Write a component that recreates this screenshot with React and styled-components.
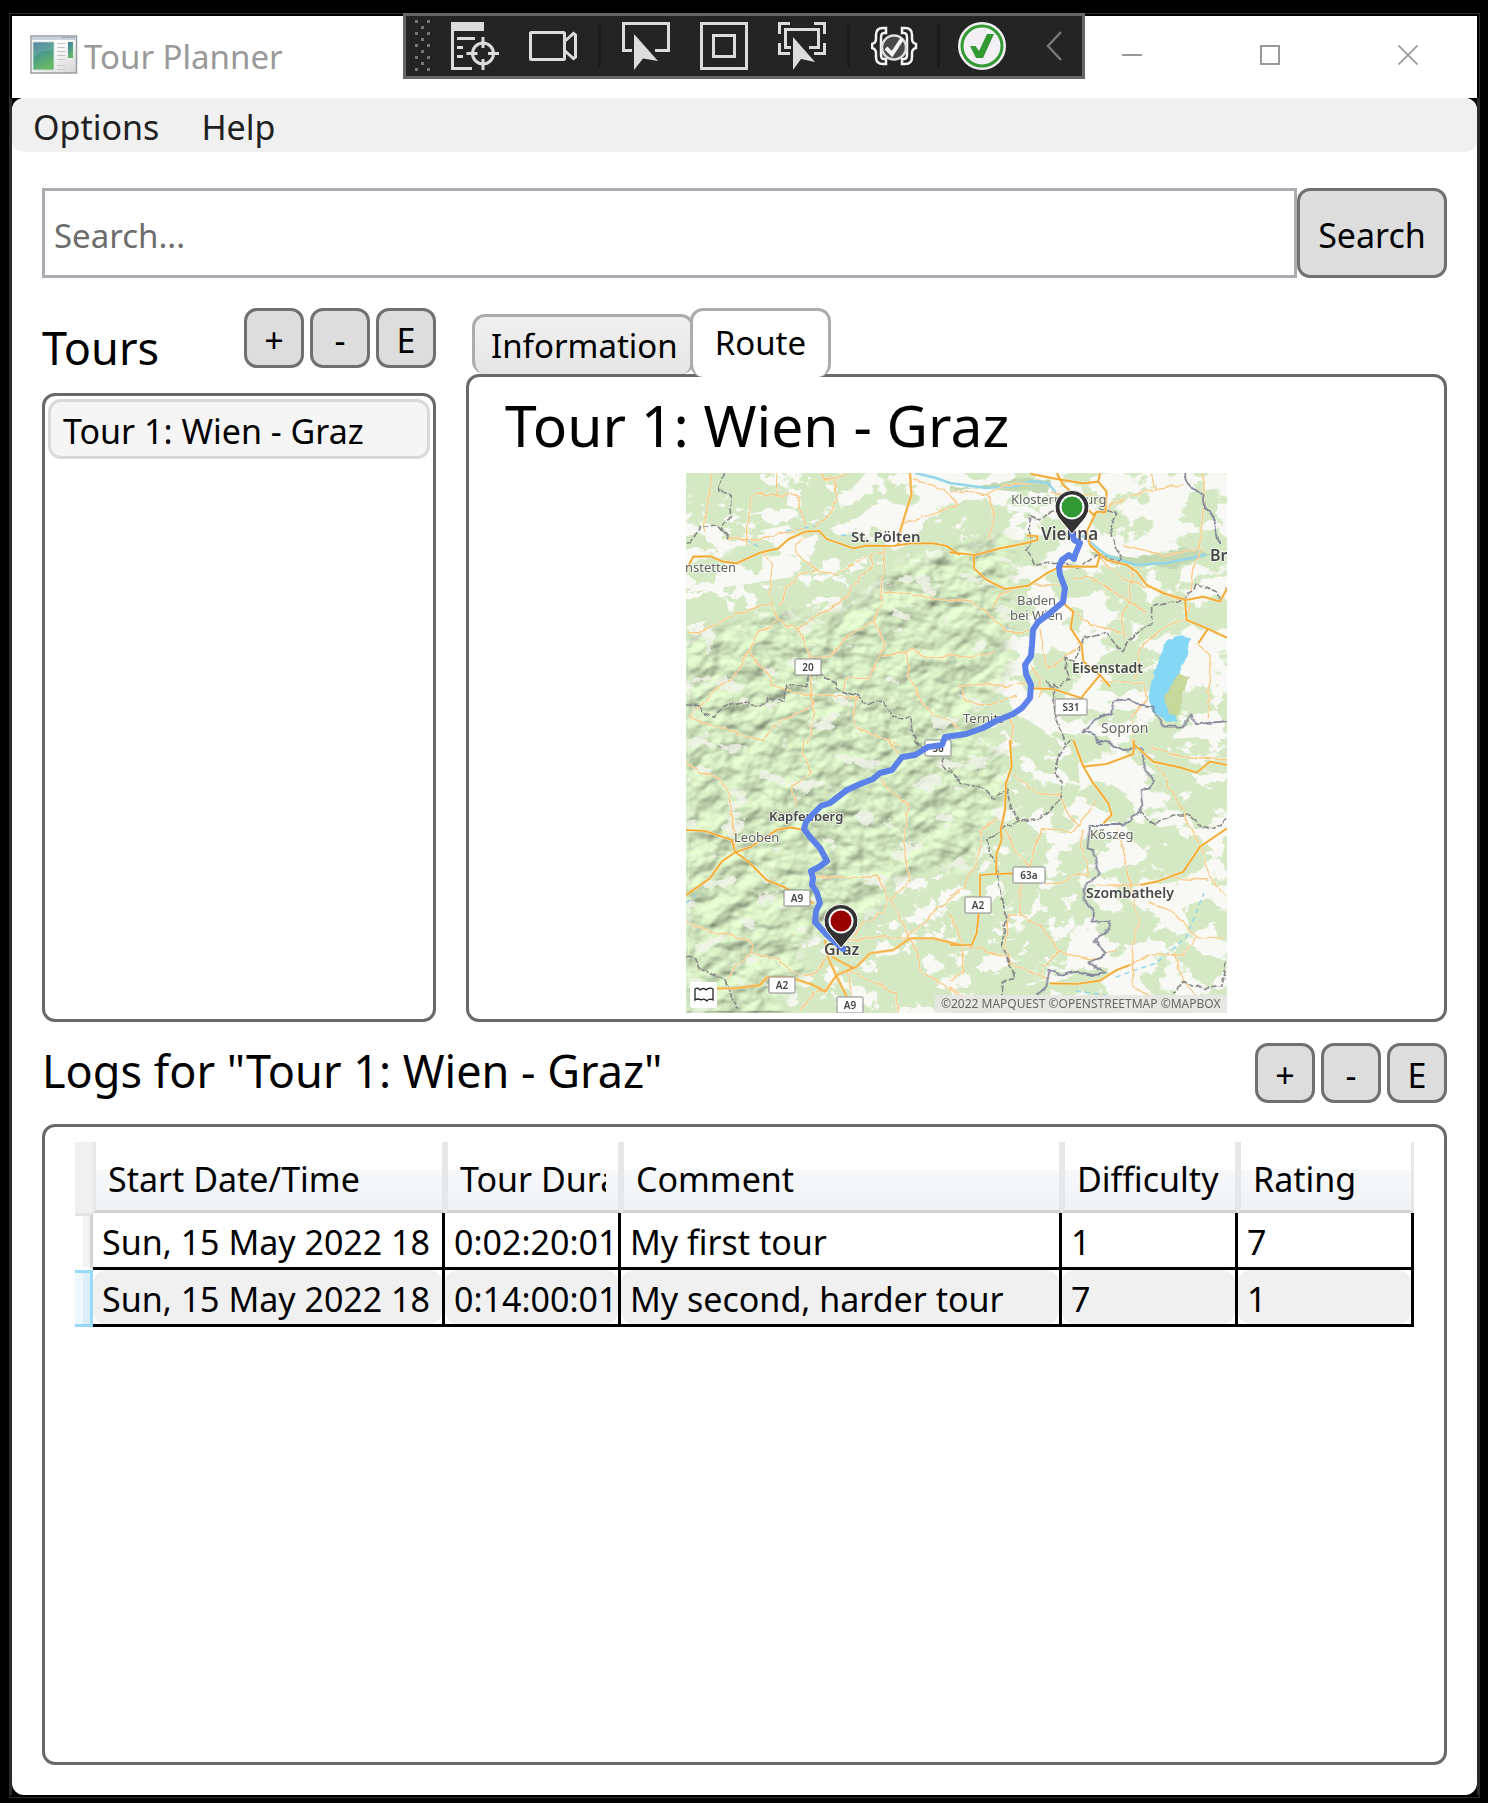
import React, { useState } from "react";
import styled, { createGlobalStyle, css } from "styled-components";

const GlobalStyle = createGlobalStyle`
  *, *::before, *::after { box-sizing: border-box; }
  body {
    margin: 0;
    background: #000;
    color: #000;
    font-family: "Noto Sans", "Open Sans", sans-serif;
    font-size: 34px;
  }
  button, input, table { font: inherit; color: inherit; }
  h1, h2, p, ul { margin: 0; padding: 0; font-weight: 400; }
`;

const Screen = styled.div`
  position: relative;
  display: flex;
  flex-direction: column;
  min-height: 100vh;
  padding: 13px 8px 5px 9px;
`;

const Frame = styled.div`
  flex: 1;
  display: flex;
  flex-direction: column;
  border: 1px solid #2b2b2b;
  padding: 2px 0;
  background: #000;
`;

const TitleBar = styled.header`
  display: flex;
  align-items: center;
  height: 82px;
  margin: 0 2px;
  padding-left: 18px;
  padding-bottom: 4px;
  background: #fff;
`;

const AppTitle = styled.h1`
  flex: 1;
  padding: 4px 0 0 6px;
  font-size: 33px;
  line-height: 46px;
  color: #999;
`;

const WindowControl = styled.button`
  display: flex;
  align-items: center;
  justify-content: center;
  width: 138px;
  height: 78px;
  padding: 0;
  border: 0;
  background: transparent;
`;

const Body = styled.div`
  flex: 1;
  display: flex;
  flex-direction: column;
  border: solid #2b2b2b;
  border-width: 0 2px;
`;

const Content = styled.div`
  flex: 1;
  display: flex;
  flex-direction: column;
  border-radius: 12px;
  background: #fff;
`;

const MenuBar = styled.nav`
  display: flex;
  height: 54px;
  padding-left: 21px;
  gap: 42px;
  border-radius: 12px;
  background: #f0f0f0;
`;

const MenuItem = styled.button`
  padding: 4px 0 0;
  border: 0;
  background: transparent;
  color: #212121;
`;

const Main = styled.main`
  flex: 1;
  display: flex;
  flex-direction: column;
  padding: 36px 30px 30px;
`;

const SearchForm = styled.form`
  display: flex;
  height: 90px;
  margin-bottom: 30px;
`;

const SearchInput = styled.input`
  flex: 1;
  min-width: 0;
  padding: 4px 9px 0;
  border: 3px solid #abadb3;
  background: #fff;
  font-size: 33px;
  outline: none;
  &::placeholder { color: #6d6d6d; opacity: 1; }
`;

const Button = styled.button`
  width: ${(p) => (p.$wide ? "150px" : "60px")};
  padding: 3px 0 0;
  border: 3px solid #707070;
  border-radius: 13px;
  background: #ddd;
`;

const ButtonGroup = styled.div`
  display: flex;
  gap: 6px;
  height: 60px;
`;

const Columns = styled.div`
  display: grid;
  grid-template-columns: 394px minmax(0, 1fr);
  column-gap: 30px;
`;

const Column = styled.section`
  display: flex;
  flex-direction: column;
  min-width: 0;
`;

const HeadingRow = styled.div`
  display: flex;
  justify-content: space-between;
  align-items: ${(p) => (p.$low ? "flex-end" : "flex-start")};
`;

const Heading = styled.h2`
  font-size: 45px;
  line-height: ${(p) => (p.$tall ? "56px" : "40px")};
  white-space: nowrap;
`;

const panel = css`
  border: 3px solid #696969;
  border-radius: 13px;
  background: #fff;
`;

const TourList = styled.ul`
  ${panel}
  flex: 1;
  margin-top: 25px;
  padding: 3px;
  list-style: none;
`;

const TourItem = styled.button`
  width: 100%;
  height: 60px;
  padding: 3px 12px 0;
  border: 3px solid #d9d9d9;
  border-radius: 13px;
  background: #f5f5f5;
  text-align: left;
`;

const Tabs = styled.div`
  display: flex;
  align-items: flex-end;
  height: 66px;
  padding-left: 6px;
`;

const Tab = styled.button`
  height: 60px;
  padding: 0 13px 0 16px;
  border: 3px solid #acacac;
  border-bottom: 0;
  border-radius: 13px;
  background: linear-gradient(#f0f0f0, #e5e5e5);
  font-size: 33px;
  ${(p) =>
    p.$active &&
    css`
      z-index: 1;
      height: 69px;
      margin: 0 0 -3px -4px;
      padding: 0 22px 3px;
      background: #fff;
    `}
`;

const RoutePanel = styled.div`
  ${panel}
  display: flex;
  flex-direction: column;
  align-items: center;
  padding-bottom: 6px;
`;

const RouteTitle = styled.h2`
  align-self: stretch;
  padding-left: 36px;
  font-size: 57px;
  line-height: 96px;
`;

const MapPicture = styled.svg`
  display: block;
  width: 541px;
  max-width: 100%;
`;

const Logs = styled.section`
  flex: 1;
  display: flex;
  flex-direction: column;
  margin-top: 21px;
`;

const LogPanel = styled.div`
  ${panel}
  flex: 1;
  margin-top: 21px;
  padding: 15px 30px;
`;

const LogTable = styled.table`
  width: 100%;
  table-layout: fixed;
  border-collapse: separate;
  border-spacing: 0;
  text-align: left;
`;

const Col = styled.col`
  width: ${(p) => p.$w};
`;

const HeadCell = styled.th`
  height: 71px;
  padding: 5px 12px 0;
  border: solid #e6e7e9;
  border-width: 0 3px 0 3px;
  border-bottom: 3px solid #d1d2d4;
  background: linear-gradient(#fff 40%, #f7f8fa 41%, #f0f2f4);
  font-weight: 400;
`;

const Corner = styled.td`
  padding: 0;
  background: #f0f0f0;
`;

const RowHead = styled.td`
  padding: 0;
  border-right: 3px solid ${(p) => (p.$selected ? "#98d8f8" : "#d3d3d3")};
  border-top: 3px solid ${(p) => (p.$selected ? "#98d8f8" : "#e4e4e6")};
  border-bottom: 3px solid ${(p) => (p.$selected ? "#98d8f8" : "#fff")};
  background: ${(p) =>
    p.$selected
      ? "linear-gradient(90deg, #eef7fc 50%, #dceefa 51%)"
      : "linear-gradient(90deg, #fff 50%, #f1f3f5 51%)"};
`;

const Cell = styled.td`
  height: 57px;
  padding: 0;
  border: solid #000;
  border-width: 0 3px 3px 0;
`;

const CellText = styled.div`
  height: 54px;
  padding: 4px 0 0 9px;
  border-radius: 13px;
  background: ${(p) => (p.$selected ? "#f0f0f0" : "#fff")};
  line-height: 50px;
`;

const Clip = styled.div`
  overflow: hidden;
  white-space: nowrap;
`;

const DebugBar = styled.div`
  position: absolute;
  top: 13px;
  left: 50%;
  transform: translateX(-50%);
  display: flex;
  align-items: center;
  height: 66px;
  padding: 0 20px 0 9px;
  border: 3px solid #666;
  background: #242424;
`;

const ToolButton = styled.button`
  display: flex;
  width: ${(p) => (p.$narrow ? "16px" : "48px")};
  height: 48px;
  margin-left: ${(p) => p.$gap || 0}px;
  padding: 0;
  border: 0;
  align-items: center;
  background: transparent;
`;

const ToolSeparator = styled.span`
  width: 3px;
  height: 42px;
  margin: 0 ${(p) => (p.$tight ? "18px" : "21px")};
  background: #1b1b1b;
`;

const Grip = () => (
  <svg width="15" height="54" viewBox="0 0 15 54" fill="#777">
    {Array.from({ length: 9 }, (_, i) =>
      i % 2 ? (
        <rect key={i} x="6" y={1 + i * 6} width="3" height="3" />
      ) : (
        <g key={i}>
          <rect x="0" y={1 + i * 6} width="3" height="3" />
          <rect x="12" y={1 + i * 6} width="3" height="3" />
        </g>
      )
    )}
  </svg>
);

const Glyph = ({ children }) => (
  <svg width="48" height="48" viewBox="0 0 48 48" fill="none" stroke="#dcdcdc" strokeWidth="3">
    {children}
  </svg>
);

const TreeIcon = () => (
  <Glyph>
    <path d="M0 0H33V9H0Z" fill="#dcdcdc" stroke="none" />
    <path d="M1.5 8V46.500H21M6 16.500H24M6 25.500H12M6 34.500H12" />
    <circle cx="32" cy="31.500" r="10.500" />
    <path d="M32 15V26M32 37V48M15.500 31.500H26.500M37 31.500H48" />
  </Glyph>
);

const CameraIcon = () => (
  <Glyph>
    <rect x="1.500" y="10.500" width="34" height="27" rx="1" />
    <path d="M36 19L44.500 11.500L46.500 13V35L44.500 36.500L36 29" />
  </Glyph>
);

const SelectIcon = () => (
  <Glyph>
    <path d="M10 28.500H1.500V1.500H46.500V28.500H33" />
    <path d="M12 12L36 39L21 36.500L12 48Z" fill="#dcdcdc" stroke="none" />
  </Glyph>
);

const AdornerIcon = () => (
  <Glyph>
    <rect x="1.500" y="1.500" width="45" height="45" />
    <rect x="13.500" y="13.500" width="21" height="21" />
  </Glyph>
);

const FocusIcon = () => (
  <Glyph>
    <path d="M1.500 12V1.500H12M36 1.500H46.500V12M1.500 21V31.500H12M36 31.500H46.500V21" />
    <path d="M13 25.500H7.500V7.500H40.500V25.500H31" />
    <path d="M15 15L37 40L23 37L15 48Z" fill="#dcdcdc" stroke="none" />
  </Glyph>
);

const ReloadIcon = () => (
  <Glyph>
    <g stroke="#f4f4f4" strokeWidth="2.500">
      <path d="M15 6H12Q5 6 5 13V17Q5 21 1 22V26Q5 27 5 31V35Q5 42 12 42H15V37H13Q10 37 10 33V16Q10 11 13 11H15Z" />
      <path d="M31 6H34Q41 6 41 13V17Q41 21 45 22V26Q41 27 41 31V35Q41 42 34 42H31V37H33Q36 37 36 33V16Q36 11 33 11H31Z" />
      <circle cx="23" cy="25.500" r="12" fill="#484848" stroke="#ddd" />
      <path d="M15 26L21 32L31 17" strokeWidth="4" />
    </g>
  </Glyph>
);

const StatusIcon = () => (
  <Glyph>
    <circle cx="24" cy="24" r="24" fill="#f2f0f4" stroke="none" />
    <circle cx="24" cy="24" r="20" stroke="#339933" />
    <path d="M12 24H17.500L21 29L29 12H36L25 36H18Z" fill="#339933" stroke="none" />
  </Glyph>
);

const ChevronIcon = () => (
  <svg width="16" height="30" viewBox="0 0 16 30" fill="none" stroke="#777" strokeWidth="2.500">
    <path d="M15 1L2 15L15 29" />
  </svg>
);

const AppIcon = () => (
  <svg width="48" height="40" viewBox="0 0 48 40">
    <defs>
      <linearGradient id="pane" x1="0" y1="0" x2="0.400" y2="1">
        <stop offset="0" stopColor="#42759e" />
        <stop offset="0.500" stopColor="#4a9a8b" />
        <stop offset="1" stopColor="#67b766" />
      </linearGradient>
      <linearGradient id="sheet" x1="0" y1="0" x2="1" y2="1">
        <stop offset="0.400" stopColor="#fff" />
        <stop offset="1" stopColor="#d4d4d4" />
      </linearGradient>
    </defs>
    <rect x="1" y="1" width="45.500" height="37" fill="url(#sheet)" stroke="#979da3" strokeWidth="1.500" />
    <rect x="2" y="2" width="43.500" height="3" fill="#c9d2dc" />
    <path d="M32 2.500H45" stroke="#98a0a8" strokeDasharray="3 1" />
    <rect x="3" y="7" width="21" height="28" fill="url(#pane)" stroke="#c6ddd5" />
    <path d="M4 22Q12 14 23 16V8H4Z" fill="#fff" opacity=".12" />
    <path d="M27 8.500H35M27 12.500H35M27 16.500H35M27 20.500H35M27 24.500H35M27 30.500H35M27 34.500H35" stroke="#c6c6c6" />
    <rect x="38" y="7" width="5" height="16" fill="url(#pane)" />
  </svg>
);

const majorRoads = [
  ["nw", "M18 315L40 275L90 274L130 290L170 295L240 263L295 250L325 223L375 200L418 198L440 222L520 250L560 242L640 243L690 235L760 235L800 243L840 270"],
  ["nw", "M690 24L694 90L675 150L660 200L655 240"],
  ["ne", "M0 262L75 270L150 250L225 235L262 225L262 213L230 212M72 270L72 310L110 345L165 372L235 362L290 325L330 305"],
  ["ne", "M320 24L340 60L380 95L430 150L440 140L466 142M440 140L410 200L420 240L470 285L530 300L560 320L590 360L640 385L710 405L760 395L810 410L831 370M705 405L710 465L770 490L831 518"],
  ["ne", "M240 26L310 40L400 55L445 50L450 24M445 50L470 80L466 142M340 415L370 440L362 490L395 540L400 590L450 630L480 665M450 630L400 690L395 700L310 672L250 670"],
  ["ne", "M330 305L440 305L450 270L420 240M775 490L745 535"],
  ["sw", "M18 270L75 273L155 300L165 335L205 365L260 420L310 440L400 490M18 465L90 415L125 365L165 337L210 322L290 270L330 262L372 270"],
  ["sw", "M100 745L165 745L240 735L260 712L330 712L360 722L400 735L435 755L470 705L530 680L570 640L640 630L690 595L760 595L840 615M435 600L445 655L468 705L500 770M455 650L520 685"],
  ["se", "M0 615L65 615L80 580L90 480L90 405L140 402L190 400M180 0L185 80L168 130L165 210L152 270L155 300L140 340L138 402M370 0L400 80L430 130L475 190L485 225L460 250"],
  ["se", "M400 80L470 72L550 42L552 0M550 12L610 65L690 82L740 98L780 65L831 75M570 435L620 425L700 395L750 320L831 265M300 730L380 732L450 722L500 690L540 675"],
];

const minorRoads = [
  ["nw", "M70 200L85 110L95 24M200 240L200 180L215 100L230 88L350 90L375 180M290 24L290 88M465 40L468 110L440 160L400 185M420 24L430 45L495 30"],
  ["nw", "M250 265L278 295L265 390L285 450L315 485L355 490L430 440L495 400L530 350L575 300L575 270L615 260M18 500L60 500L160 450L265 415M345 265L350 240L380 205M345 265L415 320L470 325L560 270"],
  ["nw", "M300 425L320 370L360 325L415 318M615 245L610 300L605 420L580 465L615 540L600 575L565 640L500 640L490 670M355 490L385 560L395 600L390 690L405 740L385 840"],
  ["nw", "M290 465L230 510L205 560L255 610L275 660L340 680L390 690L490 692L540 700M205 560L165 630L100 680L30 755L130 790L250 828L285 780L390 725M390 580L450 575L490 525L580 470"],
  ["nw", "M610 382L690 385L750 400L840 410M610 570L680 560L700 552L740 578L840 570M680 560L685 630L720 700L760 745L840 790M525 700L520 780L560 800L660 840M140 220L220 225L370 190M700 45L790 70L835 120L720 160L665 175"],
  ["ne", "M0 80L60 78L110 90L130 150L120 220M110 90L160 60L240 55M470 130L540 95L620 70L700 60M755 24L765 120L750 250L640 270L520 240M600 24L615 70M720 380L730 300L760 250"],
  ["ne", "M450 280L530 350L620 370L700 410M545 310L540 400L515 450L530 520M0 405L60 410L110 440L130 460L170 500L240 500M270 490L290 610L340 580L395 540M370 340L430 340L520 400L590 440"],
  ["ne", "M20 665L120 655L165 665L240 650M30 665L50 710L120 720L200 690M180 750L190 840M450 645L580 655L590 700L545 760L550 840M370 440L420 480L520 500M560 640L570 550L640 490L710 460L720 420"],
  ["ne", "M740 535L780 570L775 760M240 600L270 640L270 700M0 570L80 575L130 560M300 80L330 90L430 90M120 430L150 390L230 360L330 360"],
  ["sw", "M18 65L60 95L110 110L150 160L155 240L165 335M375 0L370 40L395 100L335 140L350 200M620 0L655 40M600 120L640 160L685 190L670 300L690 420L630 480L660 530L690 595"],
  ["sw", "M410 405L530 415L590 405L625 475L610 520L550 550L520 590M18 545L100 580L160 585L215 610L215 640L160 690L140 720M215 640L290 655L340 700L400 705L435 655M500 600L620 590L680 595L770 510L840 455"],
  ["sw", "M690 600L715 640L720 690L800 740L840 770M500 690L590 730L650 760L655 818M360 815L400 760L440 745M505 690L520 818"],
  ["se", "M190 105L260 160L325 165L360 230L380 255M60 400L80 370L95 270L145 235M0 470L40 440L60 405M165 270L200 340L240 380L275 265L370 275L440 180M235 380L290 430L330 430L370 405L415 405L410 360L390 320L400 265"],
  ["se", "M210 400L210 525L270 555L330 635L420 660L500 630M205 525L175 530L165 620L180 670L270 710L300 720M330 635L280 680L280 720M500 265L520 340L540 420L565 550L545 640L550 740L600 770M440 435L570 435"],
  ["se", "M560 20L640 100L700 220L750 315L780 410L831 470M590 485L660 510L740 590L831 595M740 590L700 640L590 650L540 675M670 640L700 720L740 770M600 20L700 50L831 60M670 415L775 420M0 520L35 610L40 700L0 720M35 610L100 630L165 650M0 740L40 770"],
];

const borders = [
  ["nw", "M130 24L115 80L150 85L155 155L130 170L125 190L140 220M140 215L110 180L60 185L35 230L18 232"],
  ["nw", "M18 720L60 722L70 745L100 757L140 720L180 710L225 722L260 715L265 700L310 705L320 660L380 665L385 635L430 628L465 655L470 670L490 680L540 695L545 712L610 712L635 750L665 765L690 755L700 800L715 840"],
  ["ne", "M330 120L270 165L240 150L235 190L245 230L228 255L260 300L330 290L390 305L440 270L500 290L515 285L500 250L480 205L500 145L440 130"],
  ["ne", "M375 590L345 580L360 640L320 665L290 650L310 670L315 760L350 840M375 580L400 520L465 500L515 560L550 510L605 475L605 425L700 405L740 355L800 380L810 410L831 365"],
  ["sw", "M18 650L45 655L70 690L130 715L150 760L180 810M700 0L735 25L780 20M785 50L790 80L840 120"],
  ["se", "M0 80L30 130L100 145L135 175L170 140L180 200L210 243L270 235L330 180L335 130L315 100L330 40L365 0M210 243L160 260L155 275L110 300L145 400L150 460L170 530L155 620L195 710L160 730L155 770"],
  ["se", "M565 215L615 255L670 225L720 225L750 255L790 270L831 235M831 665L815 740L760 745L700 725L670 760"],
];

const frontiers = [
  ["ne", "M705 24L715 55L760 90L765 130L785 150L795 175L808 240"],
  ["ne", "M455 840L420 800L400 805L430 765L485 745L495 710L540 705L560 718L610 725L640 785L700 785L725 745L735 778L831 768"],
  ["se", "M440 0L480 10L520 30L575 25L585 90L612 120L602 148L575 155L580 190L565 215L520 255L420 255L412 325L430 330L448 400L410 430L400 480L430 510L425 545L475 542L478 565L435 600L470 640L415 668L465 700L430 705L380 695L340 705L302 690L292 740L260 768"],
];

const tileTransform = {
  nw: "translate(-6 -8) scale(.33333)",
  ne: "translate(264 -8) scale(.33333)",
  sw: "translate(-6 267) scale(.33333)",
  se: "translate(264 267) scale(.33333)",
};

const Lines = ({ data, ...rest }) => (
  <g fill="none" strokeLinejoin="round" {...rest}>
    {data.map(([tile, d], i) => (
      <path key={i} d={d} transform={tileTransform[tile]} />
    ))}
  </g>
);

const shields = [
  [109, 186, 26, "20"],
  [369, 226, 32, "S31"],
  [239, 267, 26, "S6"],
  [98, 417, 26, "A9"],
  [279, 424, 26, "A2"],
  [327, 394, 32, "63a"],
  [83, 504, 26, "A2"],
  [151, 524, 26, "A9"],
];

const towns = [
  [165, 69, "St. Pölten", 15, 600],
  [-1, 99, "nstetten", 13, 400],
  [325, 31, "Klosterneuburg", 13, 400],
  [355, 67, "Vienna", 17, 600],
  [524, 88, "Br", 16, 600],
  [331, 132, "Baden", 13, 400],
  [324, 147, "bei Wien", 13, 400],
  [386, 200, "Eisenstadt", 14, 600],
  [277, 250, "Ternitz", 13, 400],
  [415, 260, "Sopron", 14, 400],
  [83, 348, "Kapfenberg", 13, 600],
  [48, 369, "Leoben", 13, 400],
  [404, 366, "Kőszeg", 13, 400],
  [400, 425, "Szombathely", 14, 600],
  [138, 482, "Graz", 16, 600],
];

const Pin = ({ x, y, color }) => (
  <g transform={`translate(${x} ${y})`}>
    <path d="M0 27L-14 10A17 17 0 1 1 14 10Z" fill="#333" stroke="#fff" strokeWidth="1" />
    <circle r="12.500" fill="#fff" />
    <circle r="10.500" fill={color} />
  </g>
);

const mountains =
  "M0 165L60 150L90 135L130 150L180 120L215 90L270 75L320 62L330 90L320 120L330 140L318 170L325 195L300 230L285 262L310 275L318 320L300 350L285 400L240 395L200 410L190 440L140 455L110 470L120 500L90 541L0 541Z";

const RouteMap = () => (
  <MapPicture viewBox="0 0 541 540" role="img" aria-label="Route from Vienna to Graz">
    <defs>
      <filter id="woods" x="0" y="0" width="100%" height="100%" colorInterpolationFilters="sRGB">
        <feTurbulence type="fractalNoise" baseFrequency=".026 .032" numOctaves="6" seed="8" />
        <feColorMatrix values="0 0 0 0 .83  0 0 0 0 .915  0 0 0 0 .765  26 0 0 0 -12.700" />
      </filter>
      <filter id="foothills" x="0" y="0" width="100%" height="100%" colorInterpolationFilters="sRGB">
        <feTurbulence type="fractalNoise" baseFrequency=".05 .06" numOctaves="5" seed="14" />
        <feColorMatrix values="0 0 0 0 .83  0 0 0 0 .915  0 0 0 0 .765  0 24 0 0 -10.600" />
        <feComposite in2="SourceAlpha" operator="in" />
      </filter>
      <filter id="clearings" x="0" y="0" width="100%" height="100%" colorInterpolationFilters="sRGB">
        <feTurbulence type="fractalNoise" baseFrequency=".03 .05" numOctaves="6" seed="21" />
        <feColorMatrix values="0 0 0 0 .95  0 0 0 0 .955  0 0 0 0 .92  0 22 0 0 -14.600" />
      </filter>
      <filter id="relief" x="0" y="0" width="100%" height="100%" colorInterpolationFilters="sRGB">
        <feTurbulence type="fractalNoise" baseFrequency=".04 .055" numOctaves="3" seed="5" />
        <feGaussianBlur stdDeviation="1" result="noise" />
        <feDiffuseLighting in="noise" surfaceScale="4" lightingColor="#cfe4bc" diffuseConstant="1.130">
          <feDistantLight azimuth="235" elevation="64" />
        </feDiffuseLighting>
      </filter>
      <filter id="wobble" x="-5%" y="-5%" width="110%" height="110%">
        <feTurbulence type="fractalNoise" baseFrequency=".09" numOctaves="2" seed="3" />
        <feDisplacementMap in="SourceGraphic" scale="6" xChannelSelector="R" yChannelSelector="G" />
      </filter>
      <filter id="soften"><feGaussianBlur stdDeviation="6" /></filter>
      <mask id="range"><path d={mountains} fill="#fff" filter="url(#soften)" /></mask>
    </defs>
    <rect width="541" height="540" fill="#f8f8f4" />
    <rect width="541" height="540" filter="url(#woods)" />
    <path
      d="M0 0H180L140 45L60 60L0 45ZM0 120L200 90L264 30L345 40L318 110L350 135L320 190L264 240L390 262L395 330L350 345L390 400L380 500L240 540H0ZM400 190L445 170L470 190L440 205ZM430 165L475 125L500 135L480 160L445 185ZM430 270L541 262V330L480 320ZM440 360L500 350L530 380L480 400Z"
      filter="url(#foothills)"
    />
    <path d="M264 12L360 20L365 8L345 4L264 18ZM400 78L430 92L490 95L525 80L500 75L450 85Z" fill="#c2d8b0" filter="url(#wobble)" />
    <g mask="url(#range)">
      <rect width="541" height="540" filter="url(#relief)" />
      <rect width="541" height="540" filter="url(#clearings)" opacity=".8" />
    </g>
    <g fill="none" stroke="#92d6e8" strokeWidth="2.500">
      <path d="M229 0L250 5L264 10L300 15L330 13L345 8L362 10L370 20M395 62L420 82L450 92L480 90L520 82" />
      <path d="M60 67L75 75M100 58L130 53M155 62L175 63M0 430L10 422M390 518L420 522M430 504L470 490L500 465L518 420" strokeDasharray="5 4" strokeWidth="1.500" />
    </g>
    <path d="M481 167L497 162L505 165L500 185L490 210L488 240L493 250L480 248L467 237L462 227L467 200Z" fill="#85d8f5" filter="url(#wobble)" />
    <path d="M492 200L503 205L496 222L492 244L483 240L478 225Z" fill="#c6d89a" filter="url(#wobble)" />
    <g filter="url(#wobble)">
      <Lines data={minorRoads} stroke="#fff" strokeWidth="7" opacity=".5" />
      <Lines data={minorRoads} stroke="#f8c985" strokeWidth="4" />
      <Lines data={borders} stroke="#888" strokeWidth="5" strokeDasharray="18 5" />
      <Lines data={frontiers} stroke="#85879b" strokeWidth="5.500" />
    </g>
    <Lines data={majorRoads} stroke="#fbe3b4" strokeWidth="8" />
    <Lines data={majorRoads} stroke="#f1a830" strokeWidth="5" />
    {shields.map(([x, y, w, label], i) => (
      <g key={i}>
        <rect x={x} y={y} width={w} height="16" rx="1" fill="#fff" stroke="#888" />
        <text x={x + w / 2} y={y + 12} textAnchor="middle" fontSize="10" fontWeight="600" fill="#444">
          {label}
        </text>
      </g>
    ))}
    <g stroke="#fff" strokeOpacity=".7" strokeWidth="2" paintOrder="stroke" strokeLinejoin="round">
      {towns.map(([x, y, label, size, weight]) => (
        <text key={label} x={x} y={y} fontSize={size} fontWeight={weight} fill={weight > 400 ? "#484848" : "#626262"}>
          {label}
        </text>
      ))}
    </g>
    <path
      d="M386 60L388 67L394 70L389 82L388 86L383 82L376 87L373 94L374 102L379 115L377 129L364 140L352 149L347 157L346 172L345 183L339 192L340 201L345 212L344 225L336 235L327 241L310 248L297 255L280 261L259 264L256 272L242 274L229 282L216 284L206 297L194 300L187 306L174 311L161 317L144 330L135 333L127 341L120 349L118 356L124 364L134 375L141 388L133 394L125 398L127 405L126 412L131 420L134 430L130 438L129 449L141 462L157 476"
      fill="none"
      stroke="#5c82ea"
      strokeWidth="6"
      strokeLinejoin="round"
      strokeLinecap="round"
    />
    <Pin x={386} y={34} color="#339933" />
    <Pin x={155} y={448} color="#990000" />
    <rect x="4" y="509" width="27" height="26" rx="2" fill="#fff" />
    <path d="M9 516Q12 514 14 517Q18 514 20 517Q23 514 27 516V527Q23 525 21 528Q18 525 15 527Q12 525 9 527Z" fill="none" stroke="#222" strokeWidth="1.300" />
    <rect x="249" y="522" width="292" height="18" fill="#e5e6e2" opacity=".9" />
    <text x="255" y="535" fontSize="12" fill="#666">
      ©2022 MAPQUEST ©OPENSTREETMAP ©MAPBOX
    </text>
  </MapPicture>
);

const logs = [
  ["Sun, 15 May 2022 18", "0:02:20:01", "My first tour", "1", "7"],
  ["Sun, 15 May 2022 18", "0:14:00:01", "My second, harder tour", "7", "1"],
];

const EditButtons = ({ subject }) => (
  <ButtonGroup>
    <Button type="button" aria-label={`Add ${subject}`}>+</Button>
    <Button type="button" aria-label={`Remove ${subject}`}>-</Button>
    <Button type="button" aria-label={`Edit ${subject}`}>E</Button>
  </ButtonGroup>
);

export default function App() {
  const [query, setQuery] = useState("");
  return (
    <Screen>
      <GlobalStyle />
      <Frame>
        <TitleBar>
          <AppIcon />
          <AppTitle>Tour Planner</AppTitle>
          <WindowControl aria-label="Minimize">
            <svg width="20" height="20" stroke="#999" strokeWidth="2"><path d="M0 10H20" /></svg>
          </WindowControl>
          <WindowControl aria-label="Maximize">
            <svg width="20" height="20" fill="none" stroke="#999" strokeWidth="2"><path d="M1 1H19V19H1Z" /></svg>
          </WindowControl>
          <WindowControl aria-label="Close">
            <svg width="20" height="20" stroke="#999" strokeWidth="1.700"><path d="M.5 .5L19.500 19.500M19.500 .5L.5 19.500" /></svg>
          </WindowControl>
        </TitleBar>
        <Body>
          <Content>
            <MenuBar>
              <MenuItem>Options</MenuItem>
              <MenuItem>Help</MenuItem>
            </MenuBar>
            <Main>
              <SearchForm onSubmit={(e) => e.preventDefault()}>
                <SearchInput
                  aria-label="Search tours"
                  placeholder="Search..."
                  value={query}
                  onChange={(e) => setQuery(e.target.value)}
                />
                <Button $wide>Search</Button>
              </SearchForm>
              <Columns>
                <Column>
                  <HeadingRow $low>
                    <Heading>Tours</Heading>
                    <EditButtons subject="tour" />
                  </HeadingRow>
                  <TourList>
                    <li><TourItem>Tour 1: Wien - Graz</TourItem></li>
                  </TourList>
                </Column>
                <Column>
                  <Tabs role="tablist">
                    <Tab role="tab" aria-selected="false">Information</Tab>
                    <Tab role="tab" aria-selected="true" $active>Route</Tab>
                  </Tabs>
                  <RoutePanel role="tabpanel">
                    <RouteTitle>Tour 1: Wien - Graz</RouteTitle>
                    <RouteMap />
                  </RoutePanel>
                </Column>
              </Columns>
              <Logs>
                <HeadingRow>
                  <Heading $tall>Logs for "Tour 1: Wien - Graz"</Heading>
                  <EditButtons subject="log" />
                </HeadingRow>
                <LogPanel>
                  <LogTable>
                    <colgroup>
                      <Col $w="18px" />
                      <Col $w="352px" />
                      <Col $w="176px" />
                      <Col $w="auto" />
                      <Col $w="176px" />
                      <Col $w="176px" />
                    </colgroup>
                    <thead>
                      <tr>
                        <Corner />
                        {["Start Date/Time", "Tour Duration", "Comment", "Difficulty", "Rating"].map((name) => (
                          <HeadCell key={name} scope="col"><Clip>{name}</Clip></HeadCell>
                        ))}
                      </tr>
                    </thead>
                    <tbody>
                      {logs.map((row, i) => (
                        <tr key={i}>
                          <RowHead $selected={i === 1} />
                          {row.map((value, j) => (
                            <Cell key={j}>
                              <CellText $selected={i === 1}><Clip>{value}</Clip></CellText>
                            </Cell>
                          ))}
                        </tr>
                      ))}
                    </tbody>
                  </LogTable>
                </LogPanel>
              </Logs>
            </Main>
          </Content>
        </Body>
      </Frame>
      <DebugBar role="toolbar" aria-label="Debug tools">
        <Grip />
        <ToolButton $gap={21} aria-label="Live visual tree"><TreeIcon /></ToolButton>
        <ToolButton $gap={30} aria-label="Record"><CameraIcon /></ToolButton>
        <ToolSeparator />
        <ToolButton aria-label="Select element"><SelectIcon /></ToolButton>
        <ToolButton $gap={30} aria-label="Layout adorners"><AdornerIcon /></ToolButton>
        <ToolButton $gap={30} aria-label="Track focus"><FocusIcon /></ToolButton>
        <ToolSeparator />
        <ToolButton aria-label="Binding failures"><ReloadIcon /></ToolButton>
        <ToolSeparator $tight />
        <ToolButton aria-label="Hot reload status"><StatusIcon /></ToolButton>
        <ToolButton $narrow $gap={40} aria-label="Collapse"><ChevronIcon /></ToolButton>
      </DebugBar>
    </Screen>
  );
}
